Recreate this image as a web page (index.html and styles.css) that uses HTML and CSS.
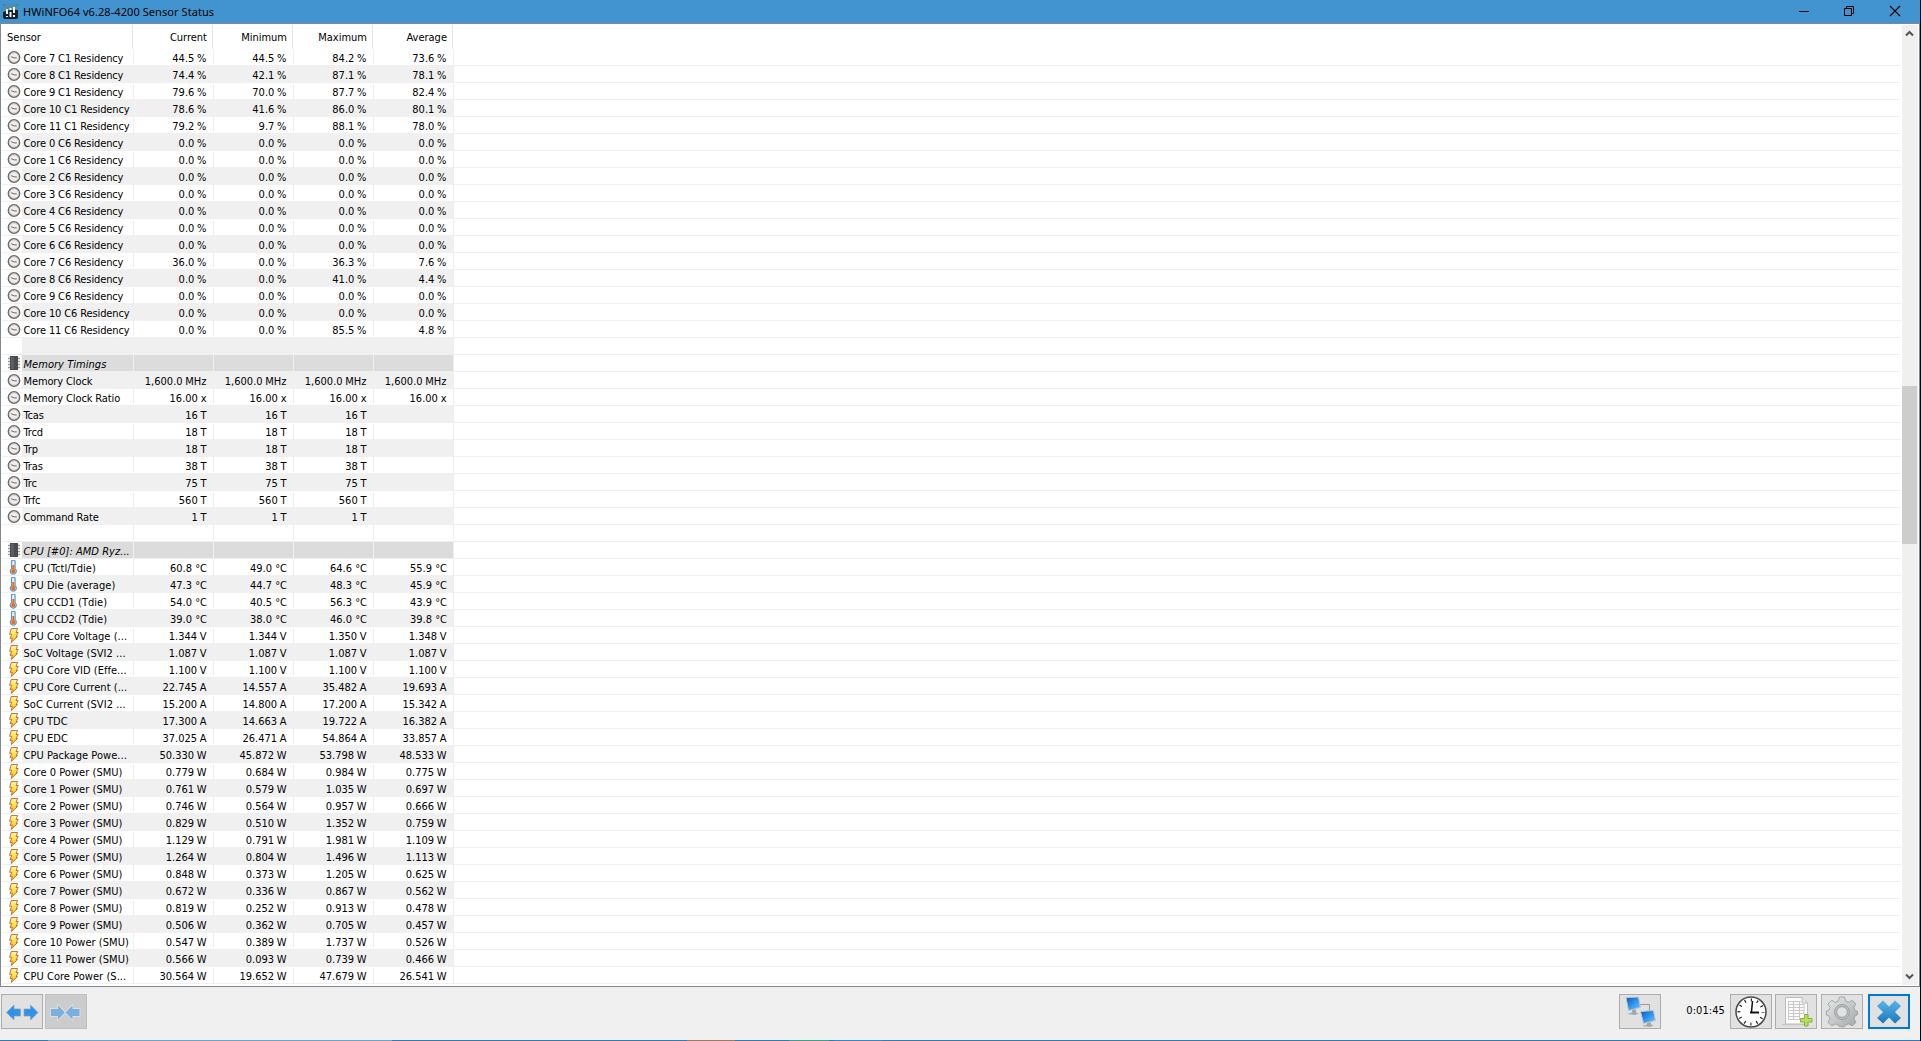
FILE: index.html
```html
<!DOCTYPE html>
<html lang="en">
<head>
    <meta charset="UTF-8">
    <title>HWiNFO64 v6.28-4200 Sensor Status</title>
    <link rel="stylesheet" href="styles.css">
</head>
<body>

    <!-- Icons used by the sensor rows -->
    <svg class="sprites" xmlns="http://www.w3.org/2000/svg">
        <defs>
            <linearGradient id="boltFill" x1="0" y1="0" x2="0" y2="1">
                <stop offset="0" stop-color="#fff6b0"/>
                <stop offset="0.5" stop-color="#ffe14a"/>
                <stop offset="1" stop-color="#ffb400"/>
            </linearGradient>
            <linearGradient id="screenFill" x1="0" y1="0" x2="1" y2="1">
                <stop offset="0" stop-color="#0a55b8"/>
                <stop offset="0.5" stop-color="#2f94ee"/>
                <stop offset="1" stop-color="#7cc4fb"/>
            </linearGradient>
            <linearGradient id="crossFill" x1="0" y1="0" x2="0" y2="1">
                <stop offset="0" stop-color="#58b4ea"/>
                <stop offset="1" stop-color="#1b78b8"/>
            </linearGradient>
            <linearGradient id="gearFill" x1="0" y1="0" x2="1" y2="1">
                <stop offset="0" stop-color="#e8ebeb"/>
                <stop offset="1" stop-color="#a3a8a8"/>
            </linearGradient>
        </defs>
        <symbol id="clock" viewBox="0 0 14 15">
            <circle cx="7" cy="7.500" r="5.700" fill="#efefef" stroke="#6a6a6a" stroke-width="1.400"/>
            <circle cx="7" cy="7.500" r="4.600" fill="none" stroke="#c4c4c4" stroke-width="0.800"/>
            <path d="M4.200 6.700L7.200 7.900H9.800" fill="none" stroke="#7a6058" stroke-width="1"/>
        </symbol>
        <symbol id="chip" viewBox="0 0 14 15">
            <path d="M1 2.500H13M1 5.500H13M1 8.500H13M1 11.500H13" stroke="#9c9c9c" stroke-width="1.300"/>
            <rect x="3" y="0" width="8" height="14" fill="#4a4c4e"/>
            <rect x="4" y="1" width="3" height="12" fill="#5c5e60"/>
        </symbol>
        <symbol id="temp" viewBox="0 0 14 15">
            <path d="M4.500 1.500a1.800 1.300 0 0 1 3.600 0V9a3 2.700 0 1 1-3.600 0z" fill="#e4f1fa" stroke="#5f98c2" stroke-width="1.200"/>
            <path d="M6.300 5V11" stroke="#f06a14" stroke-width="2"/>
            <circle cx="6.300" cy="11.200" r="2" fill="#f06a14"/>
        </symbol>
        <symbol id="bolt" viewBox="0 0 14 15">
            <path d="M4.300 0.500H10.600L9 4.600L11.200 4.400L9.200 8.600L10.500 8.500L4.200 14.500L5.300 10.200L3 10.400L4.800 6.300H2.600z" fill="url(#boltFill)" stroke="#b8682a" stroke-width="0.900"/>
        </symbol>
    </svg>

    <div class="window">
        <!-- Title bar -->
        <div class="titlebar">
            <svg class="app-icon" viewBox="0 0 15 15">
                <rect width="15" height="15" rx="2" fill="#15232e"/>
                <path d="M0 2a2 2 0 0 1 2-2H13a2 2 0 0 1 2 2V6Q8 5 0 8z" fill="#4f8fae"/>
                <path d="M4 5V10M7.500 8V13M7.500 4V6M11 3V9M11 11V13M4 12V13" stroke="#fff" stroke-width="1.900"/>
            </svg>
            <span class="title">HWiNFO64 v6.28-4200 Sensor Status</span>
            <svg class="controls" viewBox="0 0 102 16">
                <path d="M0 7.500H10" stroke="#000"/>
                <path d="M45.500 4.500h7v7h-7zM47.500 4.500V2.500h7v7h-2" fill="none" stroke="#000"/>
                <path d="M91 2L101 12M101 2L91 12" stroke="#000" stroke-width="1.100"/>
            </svg>
        </div>

        <!-- Sensor list -->
        <div class="panel">
            <div class="list">
                <div class="header">
                    <span class="name">Sensor</span>
                    <span class="cell">Current</span>
                    <span class="cell">Minimum</span>
                    <span class="cell">Maximum</span>
                    <span class="cell">Average</span>
                </div>
                <div id="rows"></div>
            </div>
            <div class="scrollbar">
                <svg class="arrow" viewBox="0 0 15 17"><path d="M4 10.500L7.500 7L11 10.500" fill="none" stroke="#555" stroke-width="2"/></svg>
                <div class="thumb"></div>
                <svg class="arrow" viewBox="0 0 15 17"><path d="M4 6.500L7.500 10L11 6.500" fill="none" stroke="#555" stroke-width="2"/></svg>
            </div>
        </div>

        <!-- Bottom toolbar -->
        <div class="toolbar">
            <button class="tool">
                <svg viewBox="0 0 40 33">
                    <g fill="#2f93e8" stroke="#8aa0b4" stroke-width="0.700">
                        <path d="M4.500 17.500L12 10V14H18.500V21H12V25z"/>
                        <path d="M36 17.500L28.500 10V14H22V21H28.500V25z"/>
                    </g>
                </svg>
            </button>
            <button class="tool disabled">
                <svg viewBox="0 0 40 33">
                    <g fill="#78afdc" stroke="#d9e3ea" stroke-width="1.600" paint-order="stroke">
                        <path d="M19 17.500L12 10.500V14H5V21H12V24.500z"/>
                        <path d="M19.500 17.500L26.500 10.500V14H33.500V21H26.500V24.500z"/>
                    </g>
                </svg>
            </button>
            <span class="spacer"></span>
            <button class="tool">
                <svg viewBox="0 0 40 33">
                    <path d="M20 9.500H29.500V16" fill="none" stroke="#999" stroke-width="1"/>
                    <path d="M12 14h4v3.500l3 .8-4 1.700-8-1 5-1.500z" fill="#a4a8ab"/>
                    <path d="M6 2.500L18.500 2L20.500 12.500L8.500 15.500z" fill="url(#screenFill)" stroke="#c3c9ce" stroke-width="1"/>
                    <path d="M27 26h4v3.500l3 .8-4 1.700-8-1 5-1.500z" fill="#a4a8ab"/>
                    <path d="M20.500 16.500L33.500 15.500L35.500 25.500L23.500 28.500z" fill="url(#screenFill)" stroke="#c3c9ce" stroke-width="1"/>
                </svg>
            </button>
            <span class="time">0:01:45</span>
            <button class="tool clock">
                <svg viewBox="0 0 40 33">
                    <circle cx="20" cy="17" r="15" fill="#fff" stroke="#4a4a4a" stroke-width="1.500"/>
                    <circle cx="20" cy="17" r="12" fill="none" stroke="#222" stroke-width="3" stroke-dasharray="1.200 5.083" stroke-dashoffset="0.600"/>
                    <path d="M20.500 17L21.500 6" stroke="#111" stroke-width="1.500"/>
                    <path d="M19 17.500H28" stroke="#111" stroke-width="2"/>
                </svg>
            </button>
            <button class="tool doc">
                <svg viewBox="0 0 40 33">
                    <path d="M6 29.500H30" stroke="#c8c8c8" stroke-width="1.500"/>
                    <path d="M9.500 2.500H26L31.500 8V29H9.500z" fill="#fbfbfb" stroke="#bdbdbd"/>
                    <path d="M26 2.500V8H31.500" fill="#e4e4e4" stroke="#bdbdbd"/>
                    <path d="M12.500 6.500H24.500M12.500 9.500H28M12.500 12.500H28M12.500 15.500H28M12.500 18.500H28M12.500 21.500H24M12.500 24.500H24M12.500 6V25M17.500 6V25M23.500 6V25M28 9V19" fill="none" stroke="#c4c4c4" stroke-width="0.900"/>
                    <path d="M28.500 19.500h3.500v4h4v3.500h-4v4h-3.500v-4h-4v-3.500h4z" fill="#b9de66" stroke="#83b532"/>
                </svg>
            </button>
            <button class="tool gear">
                <svg viewBox="0 0 40 33">
                    <g fill="url(#gearFill)" stroke="#969b9b" stroke-width="0.800">
                        <path d="M17.500 2h5l1.200 4 3 1.300 3.600-2 3.700 3.700-2 3.500 1.200 3 2.300.7v3.600l-2.300.9-1.200 3.200 2 3.300-3.700 3.700-3.600-2-3 1.200-1.200 1.700h-5l-1.200-1.700-3-1.200-3.600 2-3.700-3.700 2-3.500-1.300-3-2.300-.7v-4l2.300-.6 1.300-3-2-3.400 3.700-3.700 3.600 2 3-1.300z"/>
                        <circle cx="20" cy="17" r="7.500" fill="#b9bdbd"/>
                        <circle cx="20" cy="17" r="5.300" fill="#e1e1e1"/>
                    </g>
                </svg>
            </button>
            <button class="tool close">
                <svg viewBox="0 0 40 33">
                    <path d="M14 5.500L20 11.500L26 5.500L32 11L26 17L32 23L26 28.500L20 22.500L14 28.500L8 23L14 17L8 11z" fill="url(#crossFill)"/>
                </svg>
            </button>
        </div>
        <div class="taskbar-edge"></div>
    </div>

    <script src="script.js"></script>
</body>
</html>
```

FILE: styles.css
```css
* {
    box-sizing: border-box;
}
body {
    margin: 0;
    height: 1041px;
    overflow: hidden;
    background: #05050f;
    font-family: "DejaVu Sans Condensed", "DejaVu Sans", sans-serif;
    font-stretch: condensed;
    font-size: 11px;
    color: #000;
}
.sprites {
    position: absolute;
    width: 0;
    height: 0;
}
.window {
    width: 1920px;
    height: 1041px;
    display: flex;
    flex-direction: column;
    background: #f0f0f0;
}

/* Title bar */
.titlebar {
    height: 23px;
    flex: none;
    display: flex;
    align-items: center;
    padding: 0 19px 0 3px;
    background: #4294d0;
}
.app-icon {
    width: 15px;
    height: 15px;
    margin: -1px 5px 0 0;
}
.title {
    flex: 1;
    font-family: "Noto Sans", sans-serif;
    font-stretch: normal;
    font-size: 11px;
    line-height: 22px;
    letter-spacing: 0.07px;
}
.controls {
    width: 102px;
    height: 16px;
}

/* Sensor list */
.panel {
    height: 964px;
    flex: none;
    display: flex;
    padding: 1px;
    border: 1px solid #828790;
    background: #fff;
}
.list {
    flex: 1;
    margin-right: 1px;
}
.header, .row {
    display: grid;
    grid-template-columns: 131px 80px 80px 80px 80px 1fr;
}
.header {
    height: 24px;
    line-height: 25px;
}
.header span {
    height: 24px;
    border-right: 1px solid #e5e5e5;
}
.header .name {
    padding-left: 5px;
}
.header .cell {
    padding-right: 5px;
    text-align: right;
}
.row {
    grid-template-columns: 20px 112px 80px 80px 80px 80px 1fr;
    height: 17px;
    line-height: 19px;
    border-bottom: 1px solid #f0f0f0;
    white-space: pre;
}
.row span {
    height: 16px;
    border-right: 1px solid #f0f0f0;
}
.row .icon {
    border: none;
    padding: 1px 0 0 5px;
}
.icon svg {
    display: block;
    width: 14px;
    height: 15px;
}
.row .name {
    padding-left: 1.5px;
    letter-spacing: 0.04px;
}
.row.clock .name {
    letter-spacing: -0.12px;
}
.row .cell {
    padding-right: 6px;
    text-align: right;
}
.row.clock .cell {
    padding-right: 6.5px;
    word-spacing: -0.4px;
}
.row.bolt .cell {
    padding-right: 6.5px;
    word-spacing: -0.5px;
}
.row.shade span:not(.icon) {
    background: #f0f0f0;
}
.row.group span:not(.icon) {
    background: #dcdcdc;
}
.row.group .name {
    font-style: italic;
}

/* Scrollbar */
.scrollbar {
    width: 16px;
    display: flex;
    flex-direction: column;
    background: #f0f0f0;
}
.arrow {
    width: 15px;
    height: 17px;
    flex: none;
}
.thumb {
    width: 15px;
    height: 158px;
    margin: 344px 0 auto;
    background: #cdcdcd;
}

/* Toolbar */
.toolbar {
    flex: 1;
    display: flex;
    align-items: flex-start;
    padding: 7px 10px 0 1px;
}
.tool {
    width: 42px;
    height: 35px;
    margin: 0 2px 0 0;
    padding: 0;
    border: 1px solid #adadad;
    background: #e1e1e1;
}
.tool svg {
    display: block;
    width: 40px;
    height: 33px;
}
.tool.disabled {
    border-color: #bfbfbf;
    background: #cccccc;
}
.spacer {
    flex: 1;
}
.time {
    width: 67px;
    padding-right: 5px;
    text-align: right;
    font-size: 11px;
    line-height: 33px;
    letter-spacing: 0.08px;
}
.tool.clock {
    margin-right: 3px;
}
.tool.doc {
    margin-right: 4px;
}
.tool.gear {
    margin-right: 5px;
}
.tool.close {
    margin-right: 0;
    border: 2px solid #0078d7;
}
.tool.close svg {
    margin: -1px;
}

/* Top pixel of the taskbar with its highlighted buttons */
.taskbar-edge {
    height: 1px;
    flex: none;
    background: linear-gradient(to right,
        #2b7cb8 48px, #6aa5d0 48px 392px, #2b7cb8 392px 687px,
        #a07860 687px 735px, #2b7cb8 735px 789px, #3da08c 789px 829px,
        #2b7cb8 829px 834px, #3088d0 834px 882px, #2b7cb8 882px);
}
```

FILE: script.js
```js
// icon | name | current | minimum | maximum | average
const sensors = `
clock|Core 7 C1 Residency|44.5 %|44.5 %|84.2 %|73.6 %
clock|Core 8 C1 Residency|74.4 %|42.1 %|87.1 %|78.1 %
clock|Core 9 C1 Residency|79.6 %|70.0 %|87.7 %|82.4 %
clock|Core 10 C1 Residency|78.6 %|41.6 %|86.0 %|80.1 %
clock|Core 11 C1 Residency|79.2 %|9.7 %|88.1 %|78.0 %
clock|Core 0 C6 Residency|0.0 %|0.0 %|0.0 %|0.0 %
clock|Core 1 C6 Residency|0.0 %|0.0 %|0.0 %|0.0 %
clock|Core 2 C6 Residency|0.0 %|0.0 %|0.0 %|0.0 %
clock|Core 3 C6 Residency|0.0 %|0.0 %|0.0 %|0.0 %
clock|Core 4 C6 Residency|0.0 %|0.0 %|0.0 %|0.0 %
clock|Core 5 C6 Residency|0.0 %|0.0 %|0.0 %|0.0 %
clock|Core 6 C6 Residency|0.0 %|0.0 %|0.0 %|0.0 %
clock|Core 7 C6 Residency|36.0 %|0.0 %|36.3 %|7.6 %
clock|Core 8 C6 Residency|0.0 %|0.0 %|41.0 %|4.4 %
clock|Core 9 C6 Residency|0.0 %|0.0 %|0.0 %|0.0 %
clock|Core 10 C6 Residency|0.0 %|0.0 %|0.0 %|0.0 %
clock|Core 11 C6 Residency|0.0 %|0.0 %|85.5 %|4.8 %
|||||
chip|Memory Timings||||
clock|Memory Clock|1,600.0 MHz|1,600.0 MHz|1,600.0 MHz|1,600.0 MHz
clock|Memory Clock Ratio|16.00 x|16.00 x|16.00 x|16.00 x
clock|Tcas|16 T|16 T|16 T|
clock|Trcd|18 T|18 T|18 T|
clock|Trp|18 T|18 T|18 T|
clock|Tras|38 T|38 T|38 T|
clock|Trc|75 T|75 T|75 T|
clock|Trfc|560 T|560 T|560 T|
clock|Command Rate|1 T|1 T|1 T|
|||||
chip|CPU [#0]: AMD Ryz...||||
temp|CPU (Tctl/Tdie)|60.8 °C|49.0 °C|64.6 °C|55.9 °C
temp|CPU Die (average)|47.3 °C|44.7 °C|48.3 °C|45.9 °C
temp|CPU CCD1 (Tdie)|54.0 °C|40.5 °C|56.3 °C|43.9 °C
temp|CPU CCD2 (Tdie)|39.0 °C|38.0 °C|46.0 °C|39.8 °C
bolt|CPU Core Voltage (...|1.344 V|1.344 V|1.350 V|1.348 V
bolt|SoC Voltage (SVI2 ...|1.087 V|1.087 V|1.087 V|1.087 V
bolt|CPU Core VID (Effe...|1.100 V|1.100 V|1.100 V|1.100 V
bolt|CPU Core Current (...|22.745 A|14.557 A|35.482 A|19.693 A
bolt|SoC Current (SVI2 ...|15.200 A|14.800 A|17.200 A|15.342 A
bolt|CPU TDC|17.300 A|14.663 A|19.722 A|16.382 A
bolt|CPU EDC|37.025 A|26.471 A|54.864 A|33.857 A
bolt|CPU Package Powe...|50.330 W|45.872 W|53.798 W|48.533 W
bolt|Core 0 Power (SMU)|0.779 W|0.684 W|0.984 W|0.775 W
bolt|Core 1 Power (SMU)|0.761 W|0.579 W|1.035 W|0.697 W
bolt|Core 2 Power (SMU)|0.746 W|0.564 W|0.957 W|0.666 W
bolt|Core 3 Power (SMU)|0.829 W|0.510 W|1.352 W|0.759 W
bolt|Core 4 Power (SMU)|1.129 W|0.791 W|1.981 W|1.109 W
bolt|Core 5 Power (SMU)|1.264 W|0.804 W|1.496 W|1.113 W
bolt|Core 6 Power (SMU)|0.848 W|0.373 W|1.205 W|0.625 W
bolt|Core 7 Power (SMU)|0.672 W|0.336 W|0.867 W|0.562 W
bolt|Core 8 Power (SMU)|0.819 W|0.252 W|0.913 W|0.478 W
bolt|Core 9 Power (SMU)|0.506 W|0.362 W|0.705 W|0.457 W
bolt|Core 10 Power (SMU)|0.547 W|0.389 W|1.737 W|0.526 W
bolt|Core 11 Power (SMU)|0.566 W|0.093 W|0.739 W|0.466 W
bolt|CPU Core Power (S...|30.564 W|19.652 W|47.679 W|26.541 W`;

document.getElementById("rows").innerHTML = sensors.trim().split("\n").map((line, i) => {
    const [icon, name, ...values] = line.split("|");
    let cls = "row " + icon;
    if (icon === "chip") cls += " group";
    else if (i % 2) cls += " shade";
    const svg = icon ? `<svg><use href="#${icon}"/></svg>` : "";
    const cells = values.map(v => `<span class="cell">${v}</span>`).join("");
    return `<div class="${cls}"><span class="icon">${svg}</span><span class="name">${name}</span>${cells}</div>`;
}).join("");
```
